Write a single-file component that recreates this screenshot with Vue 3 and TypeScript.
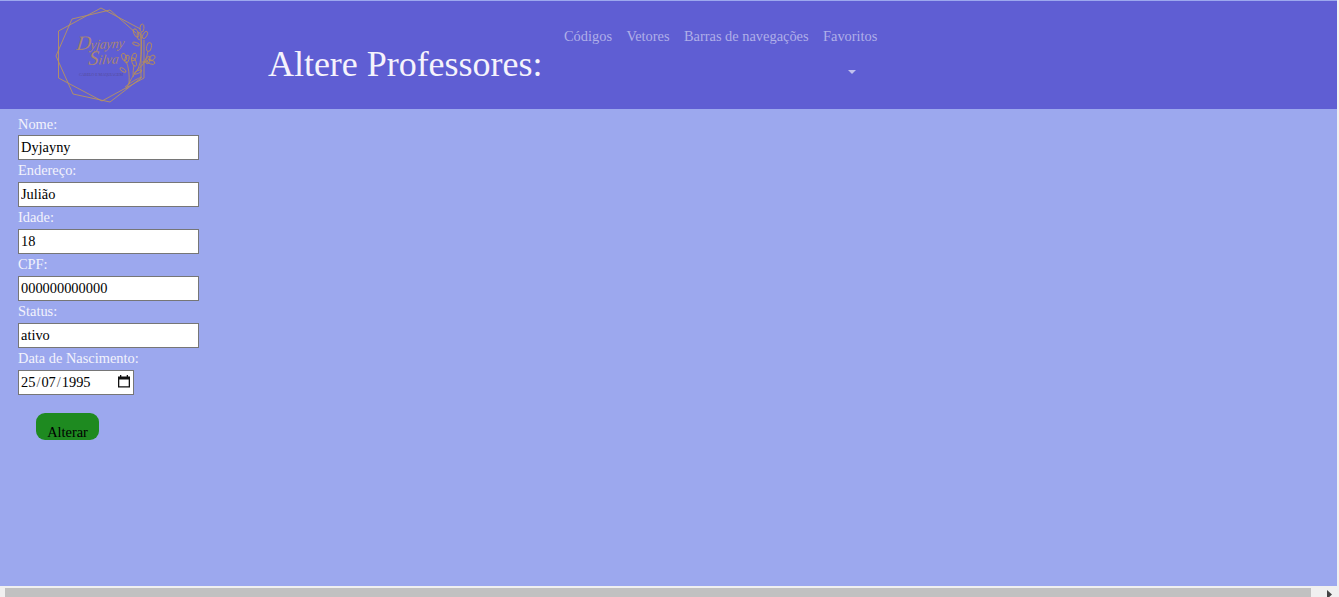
<script setup lang="ts">
import { ref } from 'vue'

interface Field {
  id: string
  label: string
  value: string
}

interface Leaf {
  x: number
  y: number
  rx: number
  ry: number
  angle: number
}

const links: string[] = ['Códigos', 'Vetores', 'Barras de navegações']
const fields = ref<Field[]>([
  { id: 'nome', label: 'Nome:', value: 'Dyjayny' },
  { id: 'endereco', label: 'Endereço:', value: 'Julião' },
  { id: 'idade', label: 'Idade:', value: '18' },
  { id: 'cpf', label: 'CPF:', value: '000000000000' },
  { id: 'status', label: 'Status:', value: 'ativo' },
])

const leaves: Leaf[] = [
  { x: 97, y: 28, rx: 2, ry: 4, angle: 5 },
  { x: 91, y: 33, rx: 2.2, ry: 4.5, angle: -25 },
  { x: 94, y: 36, rx: 1.8, ry: 4, angle: -10 },
  { x: 100, y: 35, rx: 2, ry: 4, angle: 30 },
  { x: 91, y: 44, rx: 1.5, ry: 3.6, angle: -70 },
  { x: 104, y: 47, rx: 2.4, ry: 4.5, angle: 10 },
  { x: 107, y: 58, rx: 2.2, ry: 3.5, angle: 50 },
  { x: 106, y: 62, rx: 2, ry: 4, angle: -70 },
  { x: 103, y: 60, rx: 1.8, ry: 4, angle: 15 },
  { x: 79, y: 57, rx: 2.2, ry: 3.8, angle: -20 },
  { x: 82, y: 59, rx: 2, ry: 4, angle: 15 },
  { x: 89, y: 57, rx: 2.2, ry: 4, angle: 20 },
  { x: 89, y: 62, rx: 2, ry: 4.5, angle: -20 },
  { x: 78, y: 70, rx: 1.5, ry: 3.5, angle: -55 },
  { x: 93, y: 72, rx: 1.4, ry: 4, angle: 65 },
]
</script>

<template>
  <div class="screen">
    <div class="page">
      <header class="navbar">
        <svg class="logo" viewBox="0 0 120 108" fill="none" stroke="#b8935f" stroke-width="0.9">
          <path d="M13.5 31 56 8 95.5 29M99 40V78L57 101 13.5 78V31" />
          <path d="M27 19 65 10 91 33M96 40V78L65 102 28 94 11 56 27 19" />
          <g class="script">
            <text transform="translate(31 50) rotate(-3) skewX(-10)" textLength="48"><tspan class="initial">D</tspan>yjayny</text>
            <text transform="translate(43 65) rotate(-3) skewX(-10)"><tspan class="initial">S</tspan>ilva</text>
          </g>
          <text class="tagline" x="34" y="76" textLength="44">CABELO E MAQUIAGEM</text>
          <g class="flowers">
            <path d="M81 89Q86 78 93 69 98 58 96 32M92 70Q101 64 103 51M84 84Q85 70 81 61M88 77Q88 70 89 65M97 62H102M80 87Q90 79 97 77" />
            <ellipse
              v-for="(leaf, i) in leaves"
              :key="i"
              :cx="leaf.x"
              :cy="leaf.y"
              :rx="leaf.rx"
              :ry="leaf.ry"
              :transform="`rotate(${leaf.angle} ${leaf.x} ${leaf.y})`"
            />
          </g>
        </svg>
        <h1>Altere Professores:</h1>
        <nav>
          <a v-for="link in links" :key="link">{{ link }}</a>
          <a class="dropdown">Favoritos<i class="caret"></i></a>
        </nav>
      </header>
      <form @submit.prevent>
        <template v-for="field in fields" :key="field.id">
          <label :for="field.id">{{ field.label }}</label>
          <input :id="field.id" v-model="field.value" type="text" />
        </template>
        <label>Data de Nascimento:</label>
        <div class="date">
          <span>25<b>/</b>07<b>/</b>1995</span>
          <svg width="12" height="13" viewBox="0 0 12 13">
            <path d="M0 1.5H2V0H3.3V1.5H8.7V0H10V1.5H12V12.5H0ZM1.3 4.5V11.2H10.7V4.5Z" fill="#111" fill-rule="evenodd" />
          </svg>
        </div>
        <button type="submit">Alterar</button>
      </form>
    </div>
    <div class="scrollbar">
      <div class="thumb"></div>
      <svg width="5" height="9" viewBox="0 0 5 9"><path d="M0 0 5 4.5 0 9Z" fill="#444" /></svg>
    </div>
  </div>
</template>

<style>
body { margin: 0; overflow: hidden; }
</style>

<style scoped>
.screen {
  width: 1339px;
  height: 597px;
  overflow: hidden;
  background: #f0f0f0;
  font-family: "Liberation Serif", "Times New Roman", serif;
  font-size: 14.4px;
}
.page {
  box-sizing: border-box;
  width: 1337px;
  height: 586px;
  padding-top: 1px;
  background: #9ca8ee;
}
.navbar {
  display: flex;
  align-items: flex-start;
  height: 108px;
  background: #5f5ed3;
}
.logo {
  flex: none;
  width: 120px;
  height: 108px;
  margin: -1px 0 0 45px;
}
.script text {
  font: italic 13.5px "Liberation Serif", serif;
  fill: #a98672;
  stroke: none;
}
.script .initial { font-size: 20px; }
.tagline {
  font-size: 4px;
  fill: #554b9c;
  stroke: none;
}
.flowers {
  stroke: #c0924e;
  stroke-width: 0.8;
}
h1 {
  width: 289px;
  margin: 41px 0 0 103px;
  font-size: 36px;
  font-weight: 400;
  line-height: 44px;
  letter-spacing: -0.03px;
  white-space: nowrap;
  color: #f5f3fc;
}
nav {
  display: flex;
  gap: 14.4px;
  margin-top: 25px;
  margin-left: 7px;
  line-height: 21.6px;
  color: #b0afe9;
}
.dropdown {
  display: flex;
  flex-direction: column;
  align-items: center;
}
.caret {
  margin: 22px 0 0 3px;
  border: 4px solid transparent;
  border-top-color: #c2c1ee;
  border-bottom: 0;
}
form {
  display: flex;
  flex-direction: column;
  align-items: flex-start;
  padding: 4px 18px 0;
}
label {
  height: 22px;
  line-height: 20px;
  color: #f3f3fc;
}
label:first-child { line-height: 22px; }
input,
.date {
  box-sizing: border-box;
  width: 181px;
  height: 25px;
  padding: 1px 2px;
  border: 1px solid #767676;
  background: #fff;
  color: #000;
  font: inherit;
  outline: none;
}
.date {
  display: flex;
  align-items: center;
  justify-content: space-between;
  width: 116px;
  padding-right: 3px;
}
.date svg { margin-top: -2px; }
.date b {
  padding: 0 1px;
  font-weight: 400;
  color: #555;
}
button {
  width: 63px;
  height: 27px;
  margin: 18px 0 0 18px;
  padding: 10px 0 0;
  border: 0;
  border-radius: 9px;
  background: #1e8a20;
  color: #000;
  font: inherit;
  line-height: 16px;
}
.scrollbar {
  display: flex;
  align-items: flex-start;
  height: 9px;
  padding: 2px 0 0 5px;
}
.thumb {
  width: 1306px;
  height: 9px;
  background: #c1c1c1;
}
.scrollbar svg { margin: 2px 0 0 16px; }
</style>
